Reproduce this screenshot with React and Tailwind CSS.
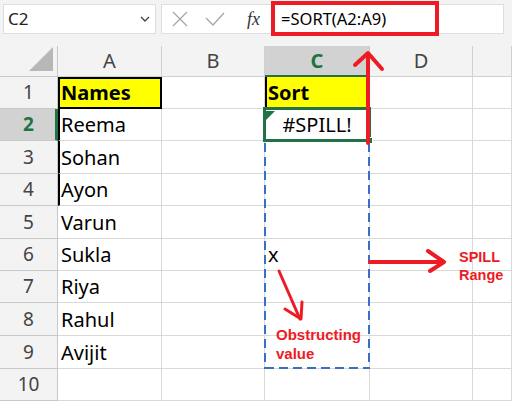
import React from 'react';

const COLS = [
  { key: 'A', w: 'w-[104px]' },
  { key: 'B', w: 'w-[103px]' },
  { key: 'C', w: 'w-[105px]' },
  { key: 'D', w: 'w-[103px]' },
  { key: 'E', w: 'w-[39px]' },
];

const ROWS = [
  { n: 1, h: 'h-[32px]', a: 'Names', c: 'Sort' },
  { n: 2, h: 'h-[32px]', a: 'Reema', c: '#SPILL!' },
  { n: 3, h: 'h-[33px]', a: 'Sohan' },
  { n: 4, h: 'h-[32px]', a: 'Ayon' },
  { n: 5, h: 'h-[33px]', a: 'Varun' },
  { n: 6, h: 'h-[32px]', a: 'Sukla', c: 'x' },
  { n: 7, h: 'h-[32px]', a: 'Riya' },
  { n: 8, h: 'h-[33px]', a: 'Rahul' },
  { n: 9, h: 'h-[33px]', a: 'Avijit' },
  { n: 10, h: 'h-[32px]', a: '' },
];

const cellBase = 'border-r border-b border-[#d9d9d9] flex items-end pb-[3px] leading-[24px] text-[20px] text-black whitespace-nowrap';

function Cell({ row, col }) {
  const w = col.w;
  if (col.key === 'A') {
    if (row.n === 1) {
      return (
        <div className={`${w} ${cellBase} !border-2 !border-black bg-[#ffff00] font-bold pl-[1px] !pb-[2px]`}>
          {row.a}
        </div>
      );
    }
    const black = row.n <= 4 ? 'border-l-2 border-l-black pl-[1px]' : 'pl-[3px]';
    return <div className={`${w} ${cellBase} ${black}`}>{row.a}</div>;
  }
  if (col.key === 'C') {
    if (row.n === 1) {
      return (
        <div className={`${w} ${cellBase} border-l-2 border-l-black bg-[#ffff00] font-bold pl-[1px]`}>
          {row.c}
        </div>
      );
    }
    if (row.n === 2) {
      return (
        <div className={`${w} ${cellBase} relative justify-center`}>
          <div className="absolute left-[-2px] top-[-2px] w-[108px] h-[35px] border-[3px] border-[#217346]" />
          <svg className="absolute left-[1px] top-[2px]" width="10" height="10" viewBox="0 0 10 10">
            <polygon points="0,0 9,0 0,9" fill="#217346" />
          </svg>
          <div className="absolute right-[-4px] bottom-[-4px] w-[7px] h-[7px] bg-[#217346] border border-white" />
          <span className="relative">{row.c}</span>
        </div>
      );
    }
    return <div className={`${w} ${cellBase} pl-[3px]`}>{row.c || ''}</div>;
  }
  return <div className={`${w} ${cellBase}`} />;
}

export default function App() {
  return (
    <div className="relative w-[512px] h-[402px] overflow-hidden bg-white font-['Noto_Sans',sans-serif]">
      {/* Formula bar */}
      <div className="h-[46px] bg-[#f3f3f3] flex items-start pt-[4px] pl-[3px] gap-[5px]">
        <div className="w-[153px] h-[30px] bg-white border border-[#dedede] flex items-center justify-between pl-[4px] pr-[5px]">
          <span className="text-[17px] text-[#222]">C2</span>
          <svg width="10" height="6" viewBox="0 0 10 6">
            <polyline points="1,1 5,5 9,1" fill="none" stroke="#444" strokeWidth="1.3" />
          </svg>
        </div>
        <div className="w-[343px] h-[30px] bg-white border border-[#dedede] flex items-center">
          <svg className="ml-[10px]" width="16" height="16" viewBox="0 0 16 16">
            <path d="M1 1 L15 15 M15 1 L1 15" stroke="#a6a6a6" strokeWidth="1.3" fill="none" />
          </svg>
          <svg className="ml-[17px]" width="20" height="14" viewBox="0 0 20 14">
            <polyline points="1,6 8,13 19,1" fill="none" stroke="#a6a6a6" strokeWidth="1.3" />
          </svg>
          <span className="ml-[22px] font-['Liberation_Serif',serif] italic text-[18px] text-[#333] leading-none">fx</span>
          <span className="ml-[21px] text-[16.5px] text-black">=SORT(A2:A9)</span>
        </div>
      </div>

      {/* Column headers */}
      <div className="flex h-[31px] bg-[#f3f3f3]">
        <div className="w-[58px] border-r border-b border-[#c8c8c8] relative">
          <svg className="absolute left-[29px] top-[1px]" width="25" height="25" viewBox="0 0 25 25">
            <polygon points="24,0 24,24 0,24" fill="#b7b7b7" />
          </svg>
        </div>
        {COLS.map((col) =>
          col.key === 'C' ? (
            <div
              key={col.key}
              className={`${col.w} bg-[#d2d2d2] border-r border-[#c8c8c8] border-b-[2px] border-b-[#217346] flex items-center justify-center text-[20px] font-bold text-[#217346]`}
            >
              C
            </div>
          ) : (
            <div
              key={col.key}
              className={`${col.w} border-r border-b border-[#d0d0d0] flex items-center justify-center text-[20px] text-[#444]`}
            >
              {col.key === 'E' ? '' : col.key}
            </div>
          )
        )}
      </div>

      {/* Rows */}
      {ROWS.map((row) => (
        <div key={row.n} className={`flex ${row.h}`}>
          {row.n === 2 ? (
            <div className="w-[58px] bg-[#d2d2d2] border-b border-[#c8c8c8] border-r-[3px] border-r-[#217346] flex items-center justify-center text-[19px] font-bold text-[#217346] pl-[2px]">
              {row.n}
            </div>
          ) : (
            <div className="w-[58px] bg-[#f3f3f3] border-r border-b border-[#c8c8c8] flex items-center justify-center text-[19px] text-[#444]">
              {row.n}
            </div>
          )}
          {COLS.map((col) => (
            <Cell key={col.key} row={row} col={col} />
          ))}
        </div>
      ))}

      {/* Annotations */}
      <div className="absolute left-[271px] top-[1px] w-[168px] h-[35px] border-[4px] border-[#ed1c24]" />
      <svg className="absolute left-0 top-0 pointer-events-none" width="512" height="402" viewBox="0 0 512 402">
        <g stroke="#3a6fc6" strokeWidth="2" strokeDasharray="9 5" fill="none">
          <line x1="265" y1="143" x2="265" y2="369" />
          <line x1="369" y1="143" x2="369" y2="369" />
          <line x1="265" y1="368" x2="369" y2="368" />
        </g>
        <g stroke="#ed1c24" strokeWidth="4" fill="none" strokeLinecap="round" strokeLinejoin="round">
          <line x1="368" y1="143" x2="368" y2="54" />
          <polyline points="355,65 368,53 382,69" />
          <line x1="370" y1="262" x2="443" y2="262" />
          <polyline points="428,251 444,262 430,271" />
        </g>
        <g stroke="#ed1c24" strokeWidth="3" fill="none" strokeLinecap="round" strokeLinejoin="round">
          <line x1="279" y1="271" x2="300" y2="319" />
          <polyline points="285,309 301,319 302,302" />
        </g>
      </svg>
      <div className="absolute left-[276px] top-[325px] font-['Liberation_Sans',Arial,sans-serif] font-bold text-[15px] leading-[19px] text-[#ed1c24]">
        Obstructing
        <br />
        value
      </div>
      <div className="absolute left-[459px] top-[248px] font-['Liberation_Sans',Arial,sans-serif] font-bold text-[14.5px] leading-[18px] text-[#ed1c24]">
        SPILL
        <br />
        Range
      </div>
    </div>
  );
}
